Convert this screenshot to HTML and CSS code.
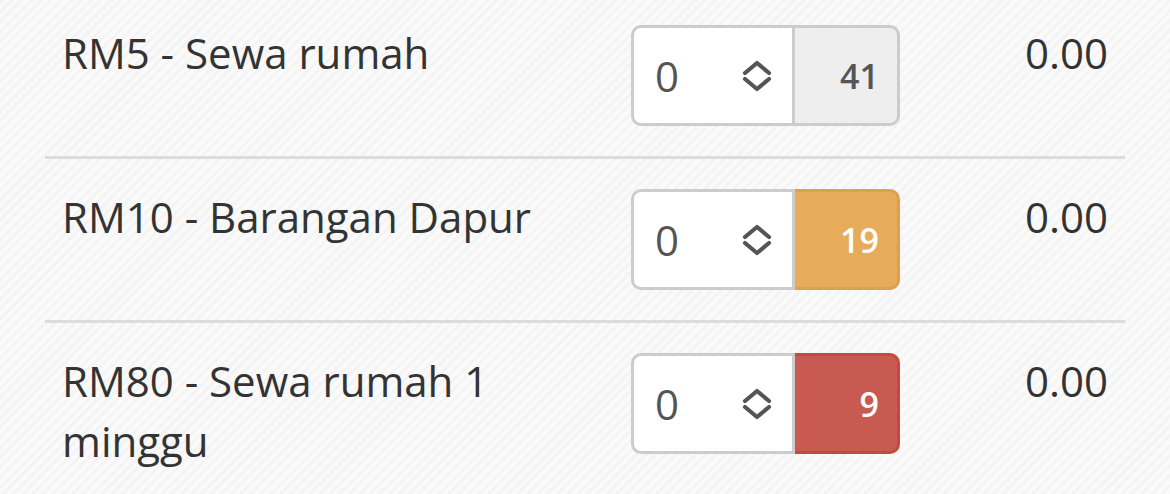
FILE: index.html
```html
<!DOCTYPE html>
<html lang="ms">
<head>
  <meta charset="UTF-8">
  <title>Sumbangan</title>
  <link rel="stylesheet" href="styles.css">
</head>
<body>
  <div class="list">
    <div class="row">
      <div class="label">RM5 - Sewa rumah</div>
      <div class="qty">
        <div class="qty-input">
          <span class="val">0</span>
          <svg class="spin" width="30" height="32" viewBox="0 0 30 32"><path d="M3 13 L15 3 L27 13 M3 19 L15 29 L27 19"/></svg>
        </div>
        <div class="badge grey">41</div>
      </div>
      <div class="amount">0.00</div>
    </div>

    <div class="row">
      <div class="label">RM10 - Barangan Dapur</div>
      <div class="qty">
        <div class="qty-input">
          <span class="val">0</span>
          <svg class="spin" width="30" height="32" viewBox="0 0 30 32"><path d="M3 13 L15 3 L27 13 M3 19 L15 29 L27 19"/></svg>
        </div>
        <div class="badge orange">19</div>
      </div>
      <div class="amount">0.00</div>
    </div>

    <div class="row">
      <div class="label">RM80 - Sewa rumah 1 minggu</div>
      <div class="qty">
        <div class="qty-input">
          <span class="val">0</span>
          <svg class="spin" width="30" height="32" viewBox="0 0 30 32"><path d="M3 13 L15 3 L27 13 M3 19 L15 29 L27 19"/></svg>
        </div>
        <div class="badge red">9</div>
      </div>
      <div class="amount">0.00</div>
    </div>
  </div>
</body>
</html>
```

FILE: styles.css
```css
* {
  margin: 0;
  padding: 0;
  box-sizing: border-box;
  font-family: 'Open Sans', 'Liberation Sans', sans-serif;
}

body {
  background-color: #f7f7f7;
  background-image: repeating-linear-gradient(135deg, rgba(0,0,0,0.012) 0 3px, rgba(255,255,255,0.4) 3px 7px);
  color: #333;
  height: 494px;
  overflow: hidden;
}

.list {
  margin: 0 45px;
  padding-top: 25px;
}

.row {
  display: grid;
  grid-template-columns: 1fr 269px 192px;
  column-gap: 16px;
  align-items: start;
  padding: 0 17px 30px 17px;
}

.row + .row {
  border-top: 3px solid #dcdcdc;
  padding-top: 30px;
}

.label,
.amount {
  font-size: 42px;
  line-height: 60px;
  margin-top: -2px;
}

.amount {
  text-align: right;
}

.qty {
  display: flex;
  height: 101px;
}

.qty-input {
  width: 164px;
  display: flex;
  align-items: center;
  justify-content: space-between;
  background: #fff;
  border: 3px solid #ccc;
  border-radius: 10px 0 0 10px;
  padding: 0 20px 0 21px;
}

.val {
  font-size: 42px;
  color: #555;
}

.spin {
  display: block;
  fill: none;
  stroke: #555;
  stroke-width: 4.2;
  stroke-linecap: round;
  stroke-linejoin: round;
}

.badge {
  flex: 1;
  display: flex;
  align-items: center;
  justify-content: flex-end;
  padding-right: 18px;
  font-size: 34px;
  font-weight: 600;
  border: 3px solid;
  border-left: none;
  border-radius: 0 10px 10px 0;
}

.grey {
  background: #eee;
  border-color: #ccc;
  color: #555;
}

.orange {
  background: #e6ac5c;
  border-color: #dca04e;
  color: #fff;
}

.red {
  background: #c95a52;
  border-color: #c04b44;
  color: #fff;
}
```
